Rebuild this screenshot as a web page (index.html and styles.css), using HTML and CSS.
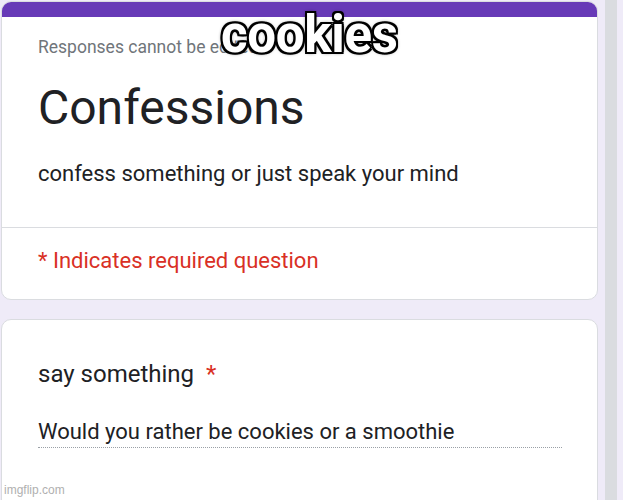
FILE: index.html
```html
<!DOCTYPE html>
<html>
<head>
<meta charset="utf-8">
<link rel="stylesheet" href="styles.css">
</head>
<body>
<div class="page">
  <div class="column">
    <div class="card header-card">
      <div class="accent"></div>
      <div class="head-body">
        <div class="notice">Responses cannot be edited</div>
        <h1 class="title">Confessions</h1>
        <div class="desc">confess something or just speak your mind</div>
      </div>
      <div class="required-note">* Indicates required question</div>
    </div>
    <div class="card question-card">
      <div class="q-title">say something <span class="star">*</span></div>
      <div class="answer">Would you rather be cookies or a smoothie</div>
    </div>
  </div>
  <div class="scrollbar"></div>
</div>
<div class="meme">cookies</div>
<div class="watermark">imgflip.com</div>
</body>
</html>
```
FILE: styles.css
```css
html, body {
  margin: 0;
  padding: 0;
  height: 500px;
  overflow: hidden;
  background: #efebf8;
  font-family: Roboto, "Noto Sans", sans-serif;
}
.page {
  display: flex;
  height: 500px;
}
.column {
  width: 597px;
  padding: 1px 0 0 1px;
  display: flex;
  flex-direction: column;
  gap: 19px;
}
.card {
  flex-shrink: 0;
  background: #fff;
  border: 1px solid #dadce0;
  border-radius: 10px;
  overflow: hidden;
}
.accent {
  height: 15px;
  background: #673ab7;
}
.head-body {
  padding: 18px 36px 0;
  height: 211px;
  box-sizing: border-box;
  border-bottom: 1px solid #dadce0;
}
.notice {
  font-size: 17.5px;
  line-height: 24px;
  color: #70757a;
}
.title {
  margin: 19px 0 0;
  font-size: 48px;
  font-weight: 400;
  line-height: 60px;
  color: #202124;
}
.desc {
  margin-top: 21px;
  font-size: 22px;
  line-height: 30px;
  color: #202124;
}
.required-note {
  padding: 18px 36px 0;
  height: 71px;
  box-sizing: border-box;
  font-size: 22px;
  line-height: 30px;
  color: #d93025;
}
.question-card {
  height: 200px;
  padding: 38px 36px 0;
  box-sizing: border-box;
}
.q-title {
  font-size: 24px;
  line-height: 32px;
  color: #202124;
}
.star {
  color: #d93025;
  margin-left: 6px;
}
.answer {
  margin-top: 27px;
  width: 524px;
  font-size: 22px;
  line-height: 30px;
  color: #202124;
  border-bottom: 1px dotted #9aa0a6;
}
.scrollbar {
  margin-left: 7px;
  width: 12px;
  height: 500px;
  background: #dadce0;
}
.meme {
  position: absolute;
  top: 5px;
  left: 221px;
  font-family: Roboto, sans-serif;
  font-weight: 700;
  font-size: 51px;
  line-height: 60px;
  color: #fff;
  letter-spacing: -0.3px;
  text-shadow: -2px -2px 0 #000, 2px -2px 0 #000, -2px 2px 0 #000, 2px 2px 0 #000, 0 2px 0 #000, 0 -2px 0 #000, 2px 0 0 #000, -2px 0 0 #000, 0 0 4px #000;
}
.watermark {
  position: absolute;
  left: 4px;
  bottom: 3px;
  font-family: "Liberation Sans", sans-serif;
  font-size: 12px;
  color: #b0b0b0;
}
```
